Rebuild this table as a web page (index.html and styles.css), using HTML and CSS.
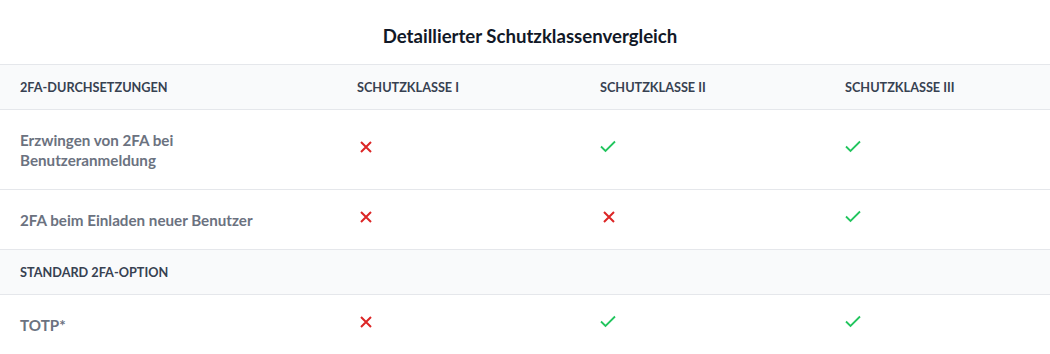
FILE: index.html
```html
<!DOCTYPE html>
<html lang="de">
<head>
<meta charset="utf-8">
<title>Detaillierter Schutzklassenvergleich</title>
<link rel="stylesheet" href="styles.css">
</head>
<body>
<div class="page">
  <h2 class="title">Detaillierter Schutzklassenvergleich</h2>
  <div class="table">
    <div class="row head">
      <div class="cell">2FA-Durchsetzungen</div>
      <div class="cell">Schutzklasse I</div>
      <div class="cell">Schutzklasse II</div>
      <div class="cell">Schutzklasse III</div>
    </div>
    <div class="row">
      <div class="cell label">Erzwingen von 2FA bei Benutzeranmeldung</div>
      <div class="cell icon"><svg class="no" viewBox="0 0 16 16" width="16" height="16"><path d="M3 3L13 13M13 3L3 13"/></svg></div>
      <div class="cell icon"><svg class="yes" viewBox="0 0 16 16" width="16" height="16"><path d="M1 7.5L5.5 12L15 2.5"/></svg></div>
      <div class="cell icon"><svg class="yes" viewBox="0 0 16 16" width="16" height="16"><path d="M1 7.5L5.5 12L15 2.5"/></svg></div>
    </div>
    <div class="row">
      <div class="cell label">2FA beim Einladen neuer Benutzer</div>
      <div class="cell icon"><svg class="no" viewBox="0 0 16 16" width="16" height="16"><path d="M3 3L13 13M13 3L3 13"/></svg></div>
      <div class="cell icon"><svg class="no" viewBox="0 0 16 16" width="16" height="16"><path d="M3 3L13 13M13 3L3 13"/></svg></div>
      <div class="cell icon"><svg class="yes" viewBox="0 0 16 16" width="16" height="16"><path d="M1 7.5L5.5 12L15 2.5"/></svg></div>
    </div>
    <div class="row head section">
      <div class="cell full">Standard 2FA-Option</div>
    </div>
    <div class="row">
      <div class="cell label">TOTP*</div>
      <div class="cell icon"><svg class="no" viewBox="0 0 16 16" width="16" height="16"><path d="M3 3L13 13M13 3L3 13"/></svg></div>
      <div class="cell icon"><svg class="yes" viewBox="0 0 16 16" width="16" height="16"><path d="M1 7.5L5.5 12L15 2.5"/></svg></div>
      <div class="cell icon"><svg class="yes" viewBox="0 0 16 16" width="16" height="16"><path d="M1 7.5L5.5 12L15 2.5"/></svg></div>
    </div>
  </div>
</div>
</body>
</html>
```

FILE: styles.css
```css
html, body {
  margin: 0;
  padding: 0;
  background: #ffffff;
}
body {
  font-family: Lato, "Noto Sans", sans-serif;
  width: 1050px;
}
.title {
  margin: 0;
  padding: 22px 0 14px 10px;
  font-size: 18.6px;
  line-height: 28px;
  font-weight: 700;
  color: #111827;
  text-align: center;
}
.table {
  border-top: 1px solid #e5e7eb;
}
.row {
  display: grid;
  grid-template-columns: 337px 243px 245px 1fr;
  align-items: center;
  border-bottom: 1px solid #e5e7eb;
}
.cell {
  padding: 20px 0 19px 20px;
  font-size: 15.2px;
  line-height: 20px;
  font-weight: 700;
  color: #6b7280;
}
.cell.label {
  padding-right: 48px;
  padding-bottom: 19px;
}
.head {
  background: #f9fafb;
}
.head .cell {
  padding: 14px 0 14px 20px;
  font-size: 12.7px;
  line-height: 16px;
  text-transform: uppercase;
  color: #374151;
}
.section .full {
  grid-column: 1 / -1;
}
.cell.icon {
  padding: 0 0 5px 20px;
  display: flex;
}
.cell.icon svg {
  display: block;
  fill: none;
  stroke-width: 2;
}
.cell.icon .no {
  stroke: #dc2626;
  margin-left: 1px;
}
.cell.icon .yes {
  stroke: #22c55e;
  stroke-width: 1.8;
}
```
